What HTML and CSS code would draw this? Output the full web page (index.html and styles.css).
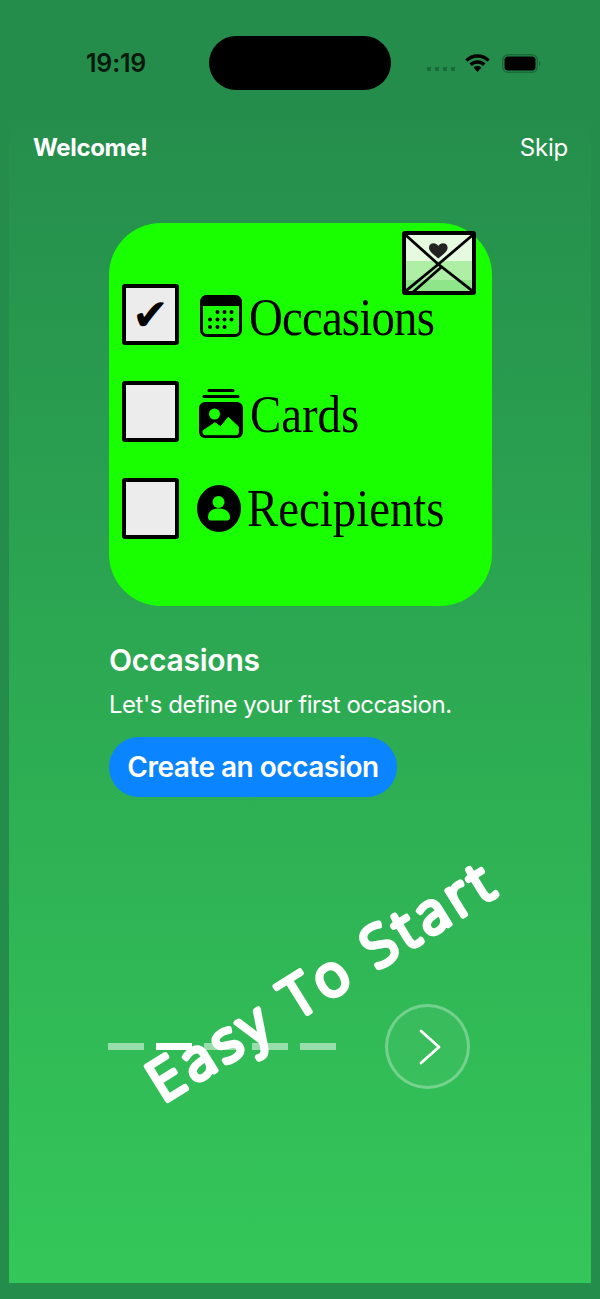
FILE: index.html
```html
<!DOCTYPE html>
<html lang="en">
<head>
<meta charset="utf-8">
<title>Welcome</title>
<link rel="stylesheet" href="styles.css">
</head>
<body>
<main class="screen">
  <div class="panel">
    <div class="status">
      <span class="time">19:19</span>
      <span class="island"></span>
      <div class="status-icons">
        <svg class="signal" width="28" height="4" viewBox="0 0 28 4"><g fill="#1a6b38"><rect x="0" y="0" width="4" height="4"/><rect x="8" y="0" width="4" height="4"/><rect x="16" y="0" width="4" height="4"/><rect x="24" y="0" width="4" height="4"/></g></svg>
        <svg class="wifi" width="25" height="18" viewBox="0 0 25 18"><path d="M1.400 6.600a15.600 15.600 0 0 1 22.200 0" fill="none" stroke="#000" stroke-width="3.400"/><path d="M5.700 10.800a9.600 9.600 0 0 1 13.600 0" fill="none" stroke="#000" stroke-width="3.400"/><path d="M12.500 18l-4-4.500a5.500 5.500 0 0 1 8 0z" fill="#000"/></svg>
        <svg class="battery" width="39" height="19" viewBox="0 0 39 19"><rect x="0.750" y="0.750" width="34.500" height="17.500" rx="5" fill="none" stroke="#1a6b38" stroke-width="1.500"/><rect x="2.500" y="2.500" width="31" height="14" rx="3.500" fill="#000"/><path d="M37 7v5a2.600 2.600 0 0 0 1.400-2.500A2.600 2.600 0 0 0 37 7z" fill="#1a6b38"/></svg>
      </div>
    </div>

    <header class="top">
      <span class="welcome">Welcome!</span>
      <span class="skip">Skip</span>
    </header>

    <section class="card">
      <svg class="envelope" width="74" height="64" viewBox="0 0 74 64">
        <rect x="2" y="2" width="70" height="28" fill="#e6fae0"/>
        <rect x="2" y="30" width="70" height="19" fill="#aeeea5"/>
        <rect x="2" y="49" width="70" height="13" fill="#8ee58a"/>
        <path d="M36.300 15c-2.300-4-9-3.500-9.300 1.500-.2 4 5.300 7.500 9.300 11 4-3.500 9.500-7 9.300-11-.3-5-7-5.500-9.300-1.500z" fill="#222"/>
        <path d="M3 3.500l33.300 29.800L71.300 60.700M71.300 3.500L36.300 33.300L3 60.700M10.500 61.500L39.500 36" fill="none" stroke="#000" stroke-width="2.800"/>
        <rect x="2" y="2" width="70" height="60" rx="1" fill="none" stroke="#000" stroke-width="4"/>
      </svg>

      <div class="row">
        <span class="box"><span class="check">✔</span></span>
        <svg class="icon icon-calendar" width="42" height="42" viewBox="0 0 42 42">
          <rect x="1.500" y="1.500" width="39" height="39" rx="5.500" fill="none" stroke="#000" stroke-width="3"/>
          <path d="M0 7a7 7 0 0 1 7-7h28a7 7 0 0 1 7 7v4H0z" fill="#000"/>
          <g fill="#000">
            <circle cx="17.500" cy="17" r="2"/><circle cx="24.500" cy="17" r="2"/><circle cx="31.500" cy="17" r="2"/>
            <circle cx="10" cy="24.500" r="2"/><circle cx="17.500" cy="24.500" r="2"/><circle cx="24.500" cy="24.500" r="2"/><circle cx="31.500" cy="24.500" r="2"/>
            <circle cx="10" cy="32" r="2"/><circle cx="17.500" cy="32" r="2"/><circle cx="24.500" cy="32" r="2"/>
          </g>
        </svg>
        <span class="label label-occasions">Occasions</span>
      </div>

      <div class="row">
        <span class="box"></span>
        <svg class="icon icon-cards" width="44" height="50" viewBox="0 0 44 50">
          <path d="M10 2.500h24M5 8.500h34" stroke="#000" stroke-width="3.200" stroke-linecap="round" fill="none"/>
          <rect x="0" y="14" width="44" height="36" rx="6" fill="#000"/>
          <circle cx="15.500" cy="26" r="5.500" fill="#19ff00"/>
          <path d="M4 42.700L16 34.700l5.700 4 7.600-9.400 10 9.400v6a2 2 0 0 1-2 2H6a2 2 0 0 1-2-2z" fill="#19ff00" stroke="#19ff00" stroke-linejoin="round"/>
        </svg>
        <span class="label label-cards">Cards</span>
      </div>

      <div class="row">
        <span class="box"></span>
        <svg class="icon icon-person" width="44" height="47" viewBox="0 0 44 47">
          <ellipse cx="22" cy="23.500" rx="22" ry="23.500" fill="#000"/>
          <circle cx="21.500" cy="17" r="6" fill="#19ff00"/>
          <path d="M11 32c0-6 5-8.500 10.500-8.500S33 26 33 32c0 2-1 3.500-3 3.500H14c-2 0-3-1.500-3-3.500z" fill="#19ff00"/>
        </svg>
        <span class="label label-recipients">Recipients</span>
      </div>
    </section>

    <section class="intro">
      <h1 class="intro-title">Occasions</h1>
      <p class="intro-text">Let's define your first occasion.</p>
      <button class="cta">Create an occasion</button>
    </section>

    <div class="pager">
      <span class="dash"></span>
      <span class="dash dash-on"></span>
      <span class="dash"></span>
      <span class="dash"></span>
      <span class="dash"></span>
      <span class="next">
        <svg width="24" height="36" viewBox="0 0 24 36"><path d="M3 2l18 16L3 34" fill="none" stroke="#fff" stroke-width="2.800" stroke-linecap="round" stroke-linejoin="round"/></svg>
      </span>
    </div>

    <svg class="stamp" width="440" height="80" viewBox="0 0 440 80">
      <text class="stamp-text" x="6" y="60">Easy To Start</text>
    </svg>
  </div>
</main>
</body>
</html>
```

FILE: styles.css
```css
* { box-sizing: border-box; }

html, body {
  margin: 0;
  padding: 0;
}

body {
  width: 600px;
  height: 1299px;
  overflow: hidden;
  font-family: Inter, "Liberation Sans", sans-serif;
  color: #fff;
}

.screen {
  height: 1299px;
  padding: 0 9px 16px;
  background: #258d4c;
}

.panel {
  position: relative;
  height: 100%;
  padding-top: 36px;
  background: linear-gradient(180deg, #258d4c 0%, #258d4c 8%, #34c759 100%);
}

.status {
  display: grid;
  grid-template-columns: 1fr 182px 1fr;
  align-items: center;
  height: 54px;
}

.time {
  padding-left: 77px;
  font-size: 25px;
  font-weight: 600;
  letter-spacing: -0.2px;
  color: #051a0c;
}

.island {
  height: 54px;
  border-radius: 27px;
  background: #000;
}

.status-icons {
  display: flex;
  align-items: center;
  padding-left: 36px;
}

.signal { margin-top: 12px; }
.wifi { margin-left: 10px; }
.battery { margin-left: 12px; }

.top {
  display: flex;
  justify-content: space-between;
  align-items: center;
  height: 30px;
  margin-top: 42px;
  padding: 0 23px 0 24px;
}

.welcome {
  font-size: 24px;
  font-weight: 700;
  letter-spacing: -0.35px;
}

.skip {
  font-size: 24px;
  font-weight: 400;
  letter-spacing: -0.2px;
}

.card {
  position: relative;
  display: flex;
  flex-direction: column;
  gap: 36px;
  width: 383px;
  height: 383px;
  margin: 61px 0 0 100px;
  padding: 61px 0 0 13px;
  border-radius: 52px;
  background: #19ff00;
}

.envelope {
  position: absolute;
  top: 8px;
  left: 293px;
}

.row {
  display: flex;
  align-items: center;
  height: 61px;
}

.box {
  display: flex;
  align-items: center;
  justify-content: center;
  flex: none;
  width: 57px;
  height: 61px;
  border: 4px solid #000;
  border-radius: 3px;
  background: #ececec;
}

.check {
  font-family: "DejaVu Sans", sans-serif;
  font-size: 44px;
  line-height: 1;
  color: #000;
}

.icon {
  flex: none;
  margin-left: 21px;
}

.icon-calendar { margin-top: 3px; }
.icon-cards { margin-left: 20px; margin-top: 2px; }
.icon-person { margin-left: 18px; }

.label {
  display: inline-block;
  margin-left: 8px;
  font-family: "Liberation Serif", serif;
  font-size: 52px;
  line-height: 61px;
  color: #000;
  transform: scaleX(0.9);
  transform-origin: left center;
}

.label-occasions {
  margin-left: 7px;
  margin-top: 6px;
  letter-spacing: -0.9px;
}

.label-cards {
  margin-left: 7px;
  margin-top: 6px;
}

.label-recipients { margin-left: 6px; }

.intro {
  display: flex;
  flex-direction: column;
  align-items: flex-start;
  margin: 36px 0 0 100px;
}

.intro-title {
  margin: 0;
  font-size: 30px;
  line-height: 36px;
  font-weight: 600;
  letter-spacing: -0.25px;
}

.intro-text {
  margin: 12px 0 0;
  font-size: 24px;
  line-height: 30px;
  font-weight: 400;
  letter-spacing: -0.47px;
}

.cta {
  width: 288px;
  height: 60px;
  margin-top: 17px;
  padding: 0;
  border: 0;
  border-radius: 30px;
  background: #0a84ff;
  color: #fff;
  font-family: Inter, "Liberation Sans", sans-serif;
  font-size: 28px;
  font-weight: 600;
  letter-spacing: -0.5px;
}

.pager {
  display: flex;
  align-items: center;
  gap: 12px;
  margin: 207px 0 0 99px;
}

.dash {
  width: 36px;
  height: 7px;
  background: rgba(255, 255, 255, 0.5);
}

.dash-on { background: #fff; }

.next {
  display: flex;
  align-items: center;
  justify-content: center;
  width: 85px;
  height: 85px;
  margin-left: 37px;
  padding-left: 5px;
  border: 3px solid rgba(255, 255, 255, 0.3);
  border-radius: 50%;
  background: rgba(255, 255, 255, 0.04);
}

.stamp {
  position: absolute;
  left: 105px;
  top: 933px;
  overflow: visible;
  transform: rotate(-32deg);
}

.stamp-text {
  font-family: "Open Sans", sans-serif;
  font-size: 56px;
  font-weight: 300;
  letter-spacing: 6px;
  fill: #fff;
  stroke: #fff;
  stroke-width: 5.5px;
  stroke-linejoin: round;
  stroke-linecap: round;
}
```
